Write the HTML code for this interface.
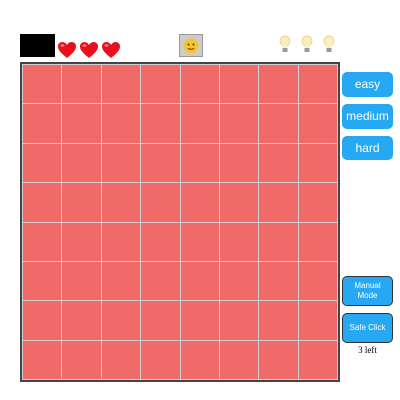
<!DOCTYPE html>
<html><head><style>
body{margin:0;width:400px;height:400px;background:#fff;position:relative;font-family:"Liberation Sans",sans-serif;overflow:hidden}
.a{position:absolute}
#blk{left:20px;top:34px;width:35px;height:23px;background:#000}
#sm{left:179px;top:34px;width:22px;height:21px;background:#ccc;border:1px solid #999;text-align:center}
#board{left:20px;top:62px;width:314px;height:314px;border:2px solid #444;background:#d0d0d0;display:grid;grid-template-columns:repeat(8,1fr);grid-template-rows:repeat(8,1fr);gap:1px;padding:1px;box-sizing:content-box}
#board div{background:#f06a6a}
.btn{left:342px;width:51px;background:#27a8f2;color:#fff;border-radius:5px;text-align:center;font-size:12px}
.btn2{border:1px solid #333;box-sizing:border-box;font-size:8px;display:flex;align-items:center;justify-content:center;line-height:10px}
</style></head><body>
<div class="a" id="blk"></div>
<svg class="a" style="left:57px;top:41px" width="66" height="18" viewBox="0 0 66 18">
<g id="ht"><path d="M10 17 C4 12 1 9 1 5.5 C1 2.5 3.2 1 5.5 1 C7.5 1 9 2.2 10 4 C11 2.2 12.5 1 14.5 1 C16.8 1 19 2.5 19 5.5 C19 9 16 12 10 17Z" fill="#e8101c"/><ellipse cx="5.5" cy="4.5" rx="2" ry="1.3" fill="#ff7a80"/></g>
<use href="#ht" x="22"/><use href="#ht" x="44"/>
</svg>
<div class="a" id="sm"><svg width="16" height="16" viewBox="0 0 16 16" style="margin-top:3px"><circle cx="8" cy="8" r="7.5" fill="#f6c431"/><circle cx="5.5" cy="6.5" r="1" fill="#5a3a10"/><circle cx="10.5" cy="6.5" r="1" fill="#5a3a10"/><path d="M5 10.5 Q8 12 11 10.5" stroke="#5a3a10" fill="none" stroke-width="1"/></svg></div>
<svg class="a" style="left:279px;top:35px" width="60" height="19" viewBox="0 0 60 19">
<g id="bl"><circle cx="6" cy="6" r="5" fill="#fbeec0" stroke="#e8c874" stroke-width=".7"/><rect x="3.5" y="10" width="5" height="5" fill="#fbeec0"/><rect x="3.5" y="13" width="5" height="4" fill="#999"/></g>
<use href="#bl" x="22"/><use href="#bl" x="44"/>
</svg>
<div class="a" id="board">
<div></div><div></div><div></div><div></div><div></div><div></div><div></div><div></div>
<div></div><div></div><div></div><div></div><div></div><div></div><div></div><div></div>
<div></div><div></div><div></div><div></div><div></div><div></div><div></div><div></div>
<div></div><div></div><div></div><div></div><div></div><div></div><div></div><div></div>
<div></div><div></div><div></div><div></div><div></div><div></div><div></div><div></div>
<div></div><div></div><div></div><div></div><div></div><div></div><div></div><div></div>
<div></div><div></div><div></div><div></div><div></div><div></div><div></div><div></div>
<div></div><div></div><div></div><div></div><div></div><div></div><div></div><div></div>
</div>
<div class="a btn" style="top:72px;height:25px;line-height:25px">easy</div>
<div class="a btn" style="top:104px;height:25px;line-height:25px">medium</div>
<div class="a btn" style="top:136px;height:24px;line-height:24px">hard</div>
<div class="a btn btn2" style="top:276px;height:30px">Manual<br>Mode</div>
<div class="a btn btn2" style="top:313px;height:30px">Safe Click</div>
<div class="a" style="left:342px;width:51px;top:345px;text-align:center;font-family:'Liberation Serif',serif;font-size:9px">3 left</div>
</body></html>
